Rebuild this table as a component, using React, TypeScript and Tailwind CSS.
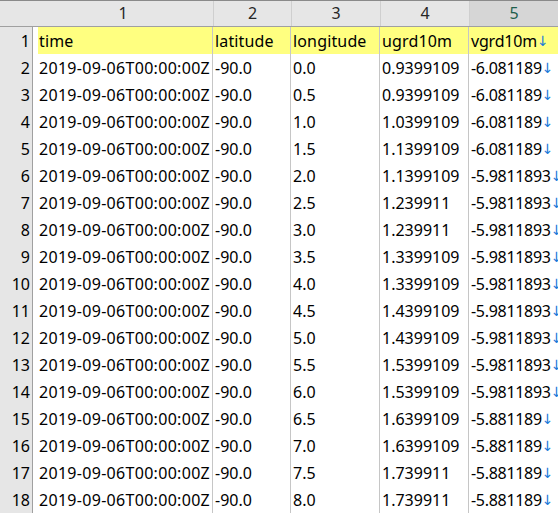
const header = ["time", "latitude", "longitude", "ugrd10m", "vgrd10m"];

const rows: [string, string, string][] = [
  ["0.0", "0.9399109", "-6.081189"],
  ["0.5", "0.9399109", "-6.081189"],
  ["1.0", "1.0399109", "-6.081189"],
  ["1.5", "1.1399109", "-6.081189"],
  ["2.0", "1.1399109", "-5.9811893"],
  ["2.5", "1.239911", "-5.9811893"],
  ["3.0", "1.239911", "-5.9811893"],
  ["3.5", "1.3399109", "-5.9811893"],
  ["4.0", "1.3399109", "-5.9811893"],
  ["4.5", "1.4399109", "-5.9811893"],
  ["5.0", "1.4399109", "-5.9811893"],
  ["5.5", "1.5399109", "-5.9811893"],
  ["6.0", "1.5399109", "-5.9811893"],
  ["6.5", "1.6399109", "-5.881189"],
  ["7.0", "1.6399109", "-5.881189"],
  ["7.5", "1.739911", "-5.881189"],
  ["8.0", "1.739911", "-5.881189"],
];

const cols = "grid grid-cols-[33px_181px_78px_89px_89px_120px]";

function Arrow() {
  return (
    <span className="text-[14px] leading-none text-[#1a7ad9] [font-family:'DejaVu_Sans',sans-serif]">
      ↓
    </span>
  );
}

function Cell({ children, yellow, first }: { children: React.ReactNode; yellow?: boolean; first?: boolean }) {
  return (
    <div className="flex h-[27px] border-r border-[#c6c6c6]">
      <div
        className={`flex flex-1 items-center whitespace-nowrap ${first ? "ml-[5px] pl-px" : "pl-[2px]"} ${
          yellow ? "bg-[#ffff80]" : ""
        }`}
      >
        {children}
      </div>
    </div>
  );
}

export default function App() {
  return (
    <div className="h-[513px] w-[558px] overflow-hidden bg-white text-[16px] text-black [font-family:'Noto_Sans',sans-serif]">
      <div className={`${cols} h-[27px] border-t border-[#8a8a8a] border-b border-b-[#a0a0a0] bg-[#e6e6e6] text-[#262626]`}>
        <div className="bg-[#e6e6e6]" />
        {["1", "2", "3", "4"].map((n) => (
          <div key={n} className="flex items-center justify-center border-r border-[#cfcfcf] pb-px">
            {n}
          </div>
        ))}
        <div className="flex w-[88px] items-center justify-center bg-[#d6d6d6] pb-px text-[#1f5f4c]">5</div>
        <div />
      </div>
      <div className="flex">
        <div className="w-[33px] shrink-0 border-r border-[#a0a0a0] bg-[#e6e6e6]">
          {Array.from({ length: 18 }, (_, i) => (
            <div key={i} className="flex h-[27px] items-center justify-end pr-[2px] pt-px">
              {i + 1}
            </div>
          ))}
        </div>
        <div className="grid grid-cols-[180px_78px_89px_89px_120px]">
          {header.map((h, i) => (
            <Cell key={h} yellow first={i === 0}>
              <span className={i === 4 ? "tracking-[-0.2px]" : "tracking-[0.15px]"}>{h}</span>
              {i === 4 && <Arrow />}
            </Cell>
          ))}
          {rows.map((r, i) => (
            <div key={i} className="contents">
              <Cell first>
                <span className="tracking-[0.3px]">2019-09-06T00:00:00Z</span>
              </Cell>
              <Cell>-90.0</Cell>
              <Cell>{r[0]}</Cell>
              <Cell>{r[1]}</Cell>
              <Cell>
                <span className="tracking-[-0.3px]">{r[2]}</span>
                <Arrow />
              </Cell>
            </div>
          ))}
        </div>
      </div>
    </div>
  );
}
